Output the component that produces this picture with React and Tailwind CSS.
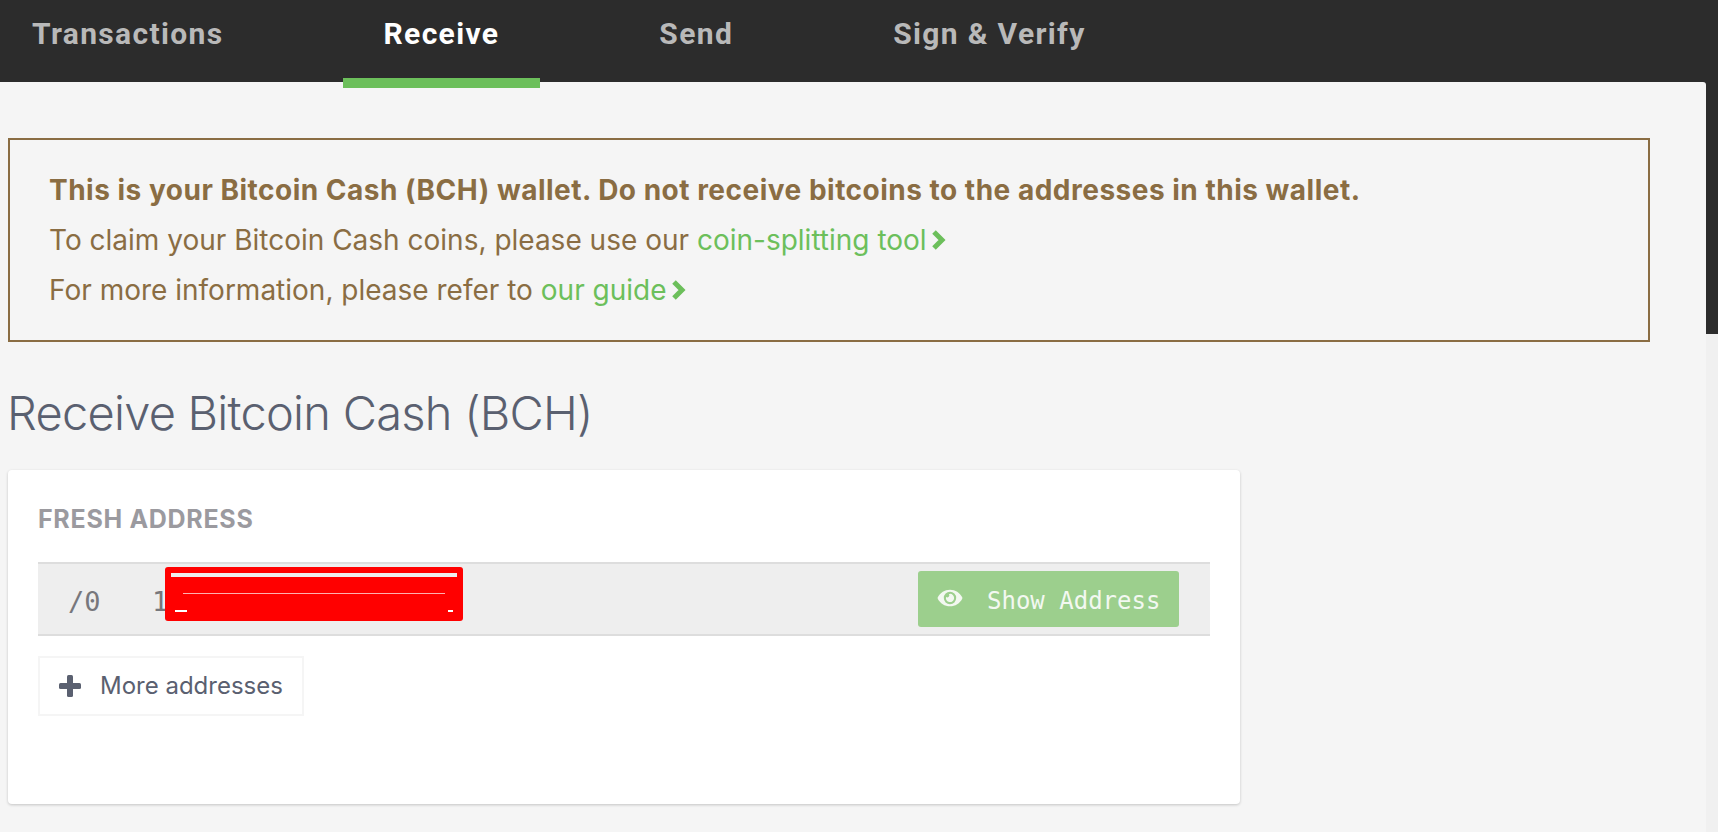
import React from 'react';
import { FaEye } from 'react-icons/fa';

const tabs = ['Transactions', 'Receive', 'Send', 'Sign & Verify'];

const GuideLink = ({ children }) => (
    <a className="text-[#6cbf5b] inline-flex items-center">
        {children}
        <svg viewBox="0 0 15 20" className="ml-[4px] w-[15px] h-[20px]" fill="none" stroke="currentColor" strokeWidth="5">
            <path d="M3 2 L11 10 L3 18" />
        </svg>
    </a>
);

export default function App() {
    return (
        <div className="h-[832px] overflow-hidden bg-[#2c2c2c] font-['Inter',sans-serif]">
            {/* top tabs */}
            <div className="h-[82px] flex items-start pl-[32px] gap-[79px] relative z-10">
                {tabs.map((tab, i) => (
                    <div
                        key={tab}
                        className={`h-[88px] pt-[16px] px-[40.5px] first:pl-0 font-['Roboto',sans-serif] font-bold text-[30px] leading-[36px] tracking-[1.35px] whitespace-nowrap ${i === 1 ? 'text-white border-b-[10px] border-[#6cbf5b]' : 'text-[#b9b9b9]'}`}
                    >
                        {tab}
                    </div>
                ))}
            </div>

            <div className="flex h-[750px]">
                <div className="flex-1 bg-[#f5f5f5] rounded-tr-[3px] pt-[56px] pl-[8px]">
                    {/* warning */}
                    <div className="w-[1642px] h-[204px] border-2 border-[#8a6d43] pl-[39px] pt-[25px] text-[#8a6d43] text-[28px] leading-[50px] whitespace-nowrap">
                        <p className="font-bold tracking-[0.5px]">This is your Bitcoin Cash (BCH) wallet. Do not receive bitcoins to the addresses in this wallet.</p>
                        <p>To claim your Bitcoin Cash coins, please use our <GuideLink>coin-splitting tool</GuideLink></p>
                        <p>For more information, please refer to <GuideLink>our guide</GuideLink></p>
                    </div>

                    <h1 className="mt-[39px] -ml-[1px] text-[47px] leading-[64px] font-light tracking-[-0.75px] text-[#5a6070]">Receive Bitcoin Cash (BCH)</h1>

                    {/* fresh address card */}
                    <div className="mt-[25px] w-[1232px] h-[334px] bg-white rounded-[4px] shadow-[0_1px_3px_rgba(0,0,0,0.2)] px-[30px]">
                        <h2 className="pt-[35px] text-[25px] leading-[28px] font-bold tracking-[0.7px] text-[#9b9a9f]">FRESH ADDRESS</h2>
                        <div className="mt-[29px] h-[74px] w-[1172px] bg-[#eeeeee] border-y-2 border-[#dddddd] flex items-center font-['DejaVu_Sans_Mono',monospace] text-[27px] text-[#77777c]">
                            <span className="ml-[30px] w-[84px] pt-[6px]">/0</span>
                            <span className="w-[13px] pt-[6px] overflow-visible">1</span>
                            <div className="w-[298px] h-[54px] self-start mt-[3px] bg-[#ff0000] rounded-[3px] pt-[6px] px-[6px]">
                                <div className="h-[4px] bg-[#eeeeee]"></div>
                                <div className="h-px mt-[16px] mx-[12px] bg-[#ffb0b0]"></div>
                                <div className="flex justify-between mt-[16px] px-[4px]">
                                    <div className="w-[12px] h-[2px] bg-white"></div>
                                    <div className="w-[5px] h-[2px] bg-white"></div>
                                </div>
                            </div>
                            <button className="ml-auto mr-[31px] w-[261px] h-[56px] bg-[#9ccf8d] rounded-[3px] flex items-center pl-[19px] text-[#f3f8f1] text-[24px]">
                                <FaEye className="w-[26px] h-[22px] -mt-[2px]" />
                                <span className="ml-[24px] pt-[3px]">Show Address</span>
                            </button>
                        </div>
                        <button className="mt-[20px] w-[266px] h-[60px] border-2 border-[#f5f5f5] flex items-center pl-[19px] text-[#5a6070]">
                            <svg viewBox="0 0 22 22" className="w-[22px] h-[22px]" fill="currentColor">
                                <rect x="8" y="0" width="6" height="22" rx="1.5" />
                                <rect x="0" y="8" width="22" height="6" rx="1.5" />
                            </svg>
                            <span className="ml-[19px] text-[24px]">More addresses</span>
                        </button>
                    </div>
                </div>

                {/* right edge */}
                <div className="w-[12px] flex flex-col">
                    <div className="h-[252px]"></div>
                    <div className="flex-1 bg-[#f0f0f0]"></div>
                </div>
            </div>
        </div>
    );
}
